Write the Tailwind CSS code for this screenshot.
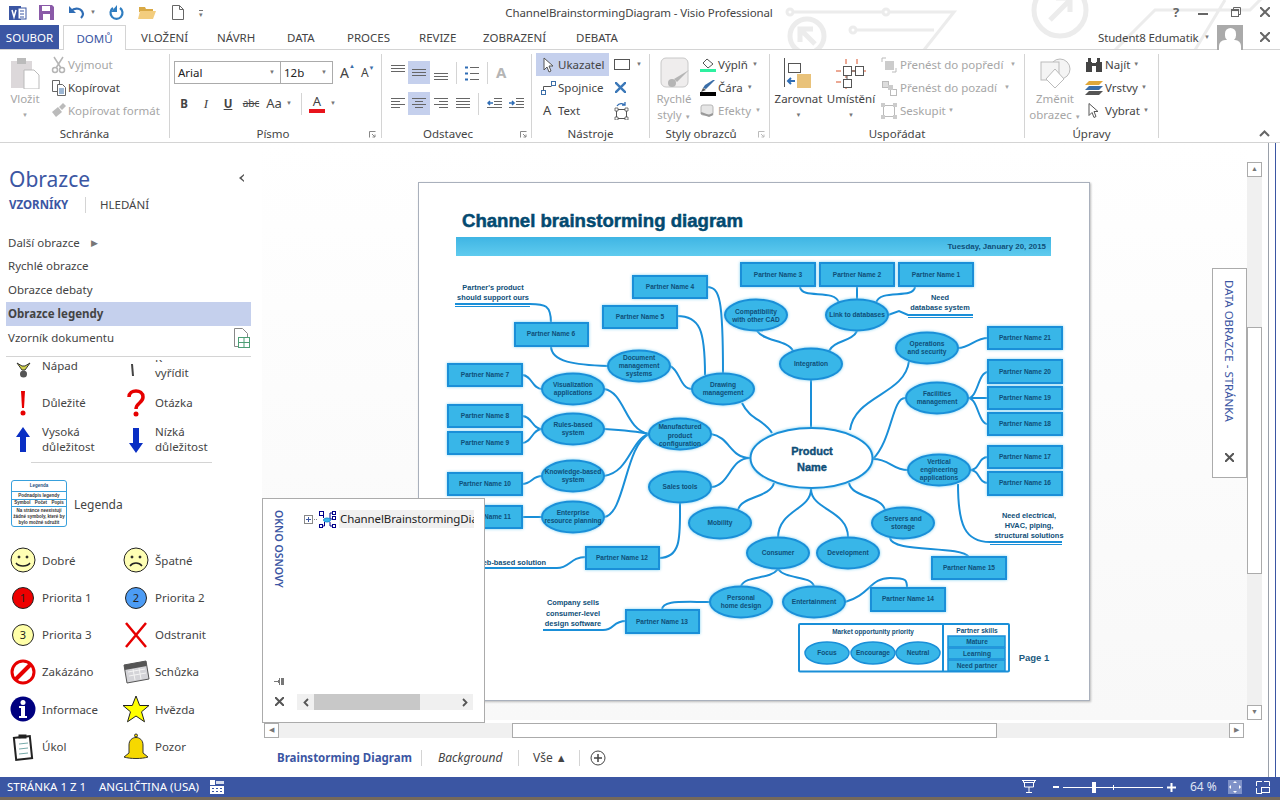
<!DOCTYPE html>
<html lang="cs">
<head>
  <meta charset="UTF-8">
  <title>ChannelBrainstormingDiagram - Visio Professional</title>
  <script src="https://cdn.jsdelivr.net/npm/@tailwindcss/browser@4"></script>
</head>
<body class="bg-white">
<div class="relative w-[1280px] h-[800px] overflow-hidden flex flex-col font-['Noto_Sans',sans-serif] text-[11.5px] text-[#444]">

  <!-- watermark behind title bar -->
  <svg class="absolute left-0 top-0" width="1280" height="50" fill="none" stroke="#ececec" stroke-width="3">
    <circle cx="1060" cy="10" r="26" stroke-width="5"/><path d="M1050 20l20-20M1056 -2h14v14" stroke-width="5"/>
    <circle cx="807" cy="36" r="17" stroke-width="5"/><path d="M815 44l-14-14M800 42V29h13" stroke-width="5"/>
    <circle cx="790" cy="12" r="3"/><path d="M793 12h90"/><circle cx="886" cy="12" r="3"/><path d="M889 12h65l-30 38"/>
    <circle cx="853" cy="30" r="3"/><path d="M856 30h78"/><path d="M1115 50l40-40h95l25-25M1225 0l-30 50"/>
  </svg>

  <!-- title bar -->
  <div class="relative h-[25px] flex items-center shrink-0">
    <svg class="ml-[9px]" width="18" height="18" viewBox="0 0 18 18"><rect x="0" y="2" width="12" height="14" fill="#3b56a3"/><rect x="9" y="4" width="8" height="11" fill="#fff" stroke="#3b56a3"/><path d="M3 6l2 7 2-7" stroke="#fff" stroke-width="1.5" fill="none"/><path d="M11 7h4M11 10h4M11 13h4" stroke="#3b56a3"/></svg>
    <svg class="ml-[12px]" width="15" height="15" viewBox="0 0 15 15"><path d="M0 0h13l2 2v13H0z" fill="#8a5aa8"/><rect x="3" y="1" width="8" height="5" fill="#fff"/><rect x="4" y="9" width="7" height="6" fill="#fff"/></svg>
    <svg class="ml-[14px]" width="17" height="17" viewBox="0 0 17 17" fill="none"><path d="M3 7c4-4 11-3 12 3 0 2-1 3-2 4" stroke="#2f6db5" stroke-width="2.2"/><path d="M1 2v7h7z" fill="#2f6db5"/></svg>
    <span class="ml-[5px] text-[6px] text-[#777]">▼</span>
    <svg class="ml-[12px]" width="16" height="16" viewBox="0 0 16 16" fill="none"><path d="M12 3a6 6 0 1 1-7 0" stroke="#2f7dc0" stroke-width="2.2"/><path d="M9 0v7H3z" fill="#2f7dc0"/></svg>
    <svg class="ml-[14px]" width="18" height="15" viewBox="0 0 18 15"><path d="M1 2h6l1 2h7v3H1z" fill="#d9a945"/><path d="M0 14l2-8h16l-3 8z" fill="#f3cd7e"/></svg>
    <svg class="ml-[16px]" width="12" height="15" viewBox="0 0 12 15" fill="#fff" stroke="#666"><path d="M.5.5h7l4 4v10H.5z"/><path d="M7.5.5v4h4" fill="none"/></svg>
    <span class="ml-[15px] text-[7px] leading-[7px] text-[#777] border-t border-[#777] mt-[2px]">▾</span>
    <div class="absolute left-[505px] top-[4px] w-[268px] text-center whitespace-nowrap text-[11.5px] tracking-[-0.12px] leading-[18px] text-[#444]">ChannelBrainstormingDiagram - Visio Professional</div>
    <span class="absolute left-[1173px] top-[3px] font-bold text-[13px] text-[#666]">?</span>
    <div class="absolute left-[1198px] top-[13px] w-[10px] h-[2px] bg-[#666]"></div>
    <svg class="absolute left-[1231px] top-[7px]" width="10" height="10" fill="none" stroke="#666"><rect x="0.5" y="2.5" width="7" height="7"/><path d="M2.5 2.5v-2h7v7h-2" /><path d="M0 3.5h8"/></svg>
    <svg class="absolute left-[1260px] top-[7px]" width="10" height="10" stroke="#666" stroke-width="2"><path d="M0 0l10 10M10 0L0 10"/></svg>
  </div>

  <!-- tabs -->
  <div class="relative h-[25px] flex items-stretch shrink-0 border-b border-[#d4d4d4] whitespace-nowrap leading-[25px] text-[11.5px]">
    <div class="w-[59px] bg-[#3b56a3] text-white text-center">SOUBOR</div>
    <div class="ml-[4px] w-[63px] h-[25px] bg-white border border-b-0 border-[#d4d4d4] text-[#3b56a3] text-center">DOMŮ</div>
    <div class="ml-[15px] w-[48px]">VLOŽENÍ</div>
    <div class="ml-[28px] w-[41px]">NÁVRH</div>
    <div class="ml-[29px] w-[31px]">DATA</div>
    <div class="ml-[29px] w-[44px]">PROCES</div>
    <div class="ml-[28px] w-[36px]">REVIZE</div>
    <div class="ml-[28px] w-[64px]">ZOBRAZENÍ</div>
    <div class="ml-[29px] w-[44px]">DEBATA</div>
    <div class="absolute left-[1098px] top-0 tracking-[-0.15px]">Student8 Edumatik</div>
    <span class="absolute left-[1204px] top-0 text-[6px] text-[#777]">▼</span>
    <div class="absolute left-[1217px] top-0 w-[26px] h-[25px] bg-[#aaa] overflow-hidden">
      <div class="mx-auto mt-[3px] w-[11px] h-[13px] bg-white rounded-full"></div>
      <div class="mx-auto mt-[-1px] w-[22px] h-[12px] bg-white rounded-t-[6px]"></div>
    </div>
    <svg class="absolute left-[1260px] top-[7px]" width="10" height="10" stroke="#666" stroke-width="2"><path d="M0 0l10 10M10 0L0 10"/></svg>
  </div>

  <!-- ribbon -->
  <div class="relative h-[93px] shrink-0 flex items-start border-b border-[#d4d4d4] whitespace-nowrap pt-[4px]">

    <!-- Schránka -->
    <div class="w-[170px] h-[84px] border-r border-[#d4d4d4] flex flex-col">
      <div class="h-[69px] flex">
        <div class="w-[50px] flex flex-col items-center text-[#a6a6a6]">
          <svg class="mt-[3px] shrink-0" width="32" height="32" viewBox="0 0 32 32"><rect x="2" y="4" width="21" height="27" fill="#dcd8da"/><rect x="8" y="1" width="9" height="6" fill="#bbb"/><path d="M15 13h10l5 5v14H15z" fill="#fff" stroke="#bbb"/></svg>
          <div class="mt-[2px] leading-[16px]">Vložit</div>
          <div class="leading-[16px] text-[6px]">▼</div>
        </div>
        <div class="flex flex-col mt-[-1px]">
          <div class="h-[23px] flex items-center text-[#a6a6a6]"><svg width="18" height="18" viewBox="0 0 18 18" fill="none" stroke="#b5b5b5" stroke-width="1.5"><circle cx="5" cy="14" r="2.5"/><circle cx="12" cy="14" r="2.5"/><path d="M6 12L13 1M11 12L4 1"/></svg>Vyjmout</div>
          <div class="h-[23px] flex items-center text-[#444]"><svg width="18" height="18" viewBox="0 0 18 18" fill="#fff" stroke="#666"><path d="M2.5 1.5h7v11h-7z"/><path d="M7.5 5.5h5l3 3v8h-8z"/><path d="M9 10h5M9 12h5M9 14h5" stroke="#3b6ea8"/></svg>Kopírovat</div>
          <div class="h-[23px] flex items-center text-[#a6a6a6]"><svg width="18" height="18" viewBox="0 0 18 18" fill="#bbb"><path d="M2 10l6-5 4 5-6 5z"/><path d="M9 5l4-4 3 3-4 4z"/></svg>Kopírovat formát</div>
        </div>
      </div>
      <div class="h-[15px] leading-[22px] text-center">Schránka</div>
    </div>

    <!-- Písmo -->
    <div class="relative w-[212px] h-[84px] border-r border-[#d4d4d4] flex flex-col">
      <div class="h-[69px] flex flex-col">
        <div class="flex items-center pl-[4px] mt-[7px] h-[23px]">
          <div class="w-[107px] h-[23px] border border-[#ababab] flex items-center px-[3px] justify-between text-[#222]">Arial<span class="text-[6px] text-[#777] mr-[2px]">▼</span></div>
          <div class="w-[52px] h-[23px] border border-l-0 border-[#ababab] flex items-center px-[3px] justify-between text-[#222]">12b<span class="text-[6px] text-[#777] mr-[2px]">▼</span></div>
          <span class="ml-[7px] text-[14px]">A<span class="align-top text-[6px] text-[#3b6ea8]">▲</span></span>
          <span class="ml-[6px] text-[12px]">A<span class="align-top text-[6px] text-[#3b6ea8]">▼</span></span>
        </div>
        <div class="flex items-center h-[23px] mt-[8px] pl-[3px] text-center">
          <span class="w-[22px] font-bold">B</span>
          <span class="w-[22px] italic font-['Liberation_Serif',serif] text-[13px]">I</span>
          <span class="w-[22px] underline font-bold">U</span>
          <span class="w-[24px] line-through text-[10px]">abc</span>
          <span class="w-[22px] text-[13px]">Aa</span>
          <span class="w-[8px] text-[6px] text-[#777]">▼</span>
          <span class="ml-[8px] w-px h-[22px] bg-[#d4d4d4]"></span>
          <span class="ml-[6px] w-[18px] flex flex-col items-center text-[13px] leading-[15px]">A<span class="w-[16px] h-[4px] bg-[#e8141c]"></span></span>
          <span class="ml-[4px] text-[6px] text-[#777]">▼</span>
        </div>
      </div>
      <div class="h-[15px] leading-[22px] text-center pr-[5px]">Písmo</div>
      <svg class="absolute left-[199px] top-[77px]" width="7" height="7" fill="none" stroke="#888"><path d="M.5 6.5v-6h6M3 3l3 3M6 3.5V6H3.5"/></svg>
    </div>

    <!-- Odstavec -->
    <div class="relative w-[150px] h-[84px] border-r border-[#d4d4d4] flex flex-col">
      <div class="h-[69px] flex flex-col pl-[5px]">
        <div class="flex items-center mt-[7px] h-[23px]">
          <div class="w-[21px] h-[23px] flex justify-center items-start pt-[4px]"><svg width="14" height="8" stroke="#666"><path d="M0 .5h14M0 3.5h14M0 6.5h14"/></svg></div>
          <div class="w-[22px] h-[23px] flex justify-center items-center bg-[#c5d0ed]"><svg width="14" height="8" stroke="#666"><path d="M0 .5h14M0 3.5h14M0 6.5h14"/></svg></div>
          <div class="w-[21px] h-[23px] flex justify-center items-end pb-[3px]"><svg width="14" height="8" stroke="#666"><path d="M0 .5h14M0 3.5h14M0 6.5h14"/></svg></div>
          <span class="ml-[5px] w-px h-[22px] bg-[#d4d4d4]"></span>
          <svg class="ml-[8px]" width="14" height="16" stroke="#666"><path d="M5 2.5h9M5 8.5h9M5 14.5h9"/><path d="M0 2.5h3M0 8.5h3M0 14.5h3" stroke="#2f6db5" stroke-width="2"/></svg>
          <span class="ml-[8px] w-px h-[22px] bg-[#d4d4d4]"></span>
          <span class="ml-[8px] text-[15px] font-bold text-[#b5b5b5]">A</span>
        </div>
        <div class="flex items-center mt-[8px] h-[23px]">
          <div class="w-[21px] flex justify-center"><svg width="14" height="11" stroke="#666"><path d="M0 .5h14M0 3.5h9M0 6.5h14M0 9.5h9"/></svg></div>
          <div class="w-[22px] h-[23px] flex justify-center items-center bg-[#c5d0ed]"><svg width="14" height="11" stroke="#666"><path d="M0 .5h14M3 3.5h8M0 6.5h14M3 9.5h8"/></svg></div>
          <div class="w-[21px] flex justify-center"><svg width="14" height="11" stroke="#666"><path d="M0 .5h14M5 3.5h9M0 6.5h14M5 9.5h9"/></svg></div>
          <div class="w-[23px] flex justify-center"><svg width="14" height="11" stroke="#666"><path d="M0 .5h14M0 3.5h14M0 6.5h14M0 9.5h14"/></svg></div>
          <span class="ml-[4px] w-px h-[22px] bg-[#d4d4d4]"></span>
          <svg class="ml-[8px]" width="15" height="11" fill="none" stroke="#666"><path d="M7 .5h8M7 3.5h8M7 6.5h8M0 9.5h15"/><path d="M6 5H1M3 3L1 5l2 2" stroke="#2f6db5" stroke-width="1.5"/></svg>
          <svg class="ml-[7px]" width="15" height="11" fill="none" stroke="#666"><path d="M7 .5h8M7 3.5h8M7 6.5h8M0 9.5h15"/><path d="M0 5h5M3 3l2 2-2 2" stroke="#2f6db5" stroke-width="1.5"/></svg>
        </div>
      </div>
      <div class="h-[15px] leading-[22px] text-center pr-[17px]">Odstavec</div>
      <svg class="absolute left-[138px] top-[77px]" width="7" height="7" fill="none" stroke="#888"><path d="M.5 6.5v-6h6M3 3l3 3M6 3.5V6H3.5"/></svg>
    </div>

    <!-- Nástroje -->
    <div class="w-[118px] h-[84px] border-r border-[#d4d4d4] flex flex-col">
      <div class="h-[69px] flex flex-col mt-[-1px]">
        <div class="flex items-center h-[23px]">
          <div class="ml-[4px] w-[73px] h-[23px] bg-[#c5d0ed] flex items-center pl-[7px]"><svg width="12" height="16" viewBox="0 0 12 16" fill="#fff" stroke="#555"><path d="M1 1v12l3-3 2 5 2-1-2-5h4z"/></svg><span class="ml-[3px]">Ukazatel</span></div>
          <div class="ml-[5px] w-[16px] h-[11px] border border-[#555]"></div>
          <span class="ml-[6px] text-[6px] text-[#777]">▼</span>
        </div>
        <div class="flex items-center h-[23px]">
          <svg class="ml-[8px]" width="17" height="16" fill="#fff" stroke="#3b6ea8"><rect x="11.5" y="1.5" width="4" height="4"/><rect x="1.5" y="10.5" width="4" height="4"/><path d="M3.5 10V6.5h8" fill="none" stroke="#555"/></svg>
          <span class="ml-[1px] w-[57px]">Spojnice</span>
          <svg width="11" height="11" stroke="#3b78b8" stroke-width="2.4"><path d="M0 0l11 11M11 0L0 11"/></svg>
        </div>
        <div class="flex items-center h-[23px]">
          <span class="ml-[11px] w-[15px] text-[13px]">A</span>
          <span class="w-[55px]">Text</span>
          <svg width="16" height="18" fill="none" stroke="#555"><rect x="3.5" y="7.5" width="10" height="9"/><path d="M2 6h3v3H2zM12 6h3v3h-3zM2 15h3v3H2zM12 15h3v3h-3z" fill="#fff" stroke-width="0.8"/><path d="M4 4c2-3 6-3 8-1M12 0v3H9" stroke="#2f6db5" stroke-width="1.3"/></svg>
        </div>
      </div>
      <div class="h-[15px] mt-[1px] leading-[22px] text-center">Nástroje</div>
    </div>

    <!-- Styly obrazců -->
    <div class="relative w-[120px] h-[84px] border-r border-[#d4d4d4] flex flex-col">
      <div class="h-[69px] flex">
        <div class="w-[48px] flex flex-col items-center text-[#a6a6a6]">
          <svg class="mt-[3px] ml-[2px] shrink-0" width="32" height="32" viewBox="0 0 32 32"><rect x="2" y="1" width="27" height="29" rx="5" fill="#efeded" stroke="#c8c8c8"/><path d="M30 13L18 25l-3-3z" fill="#b5b5b5"/><circle cx="13" cy="26" r="4" fill="#b5b5b5"/></svg>
          <div class="mt-[2px] leading-[16px] shrink-0">Rychlé</div>
          <div class="leading-[16px] shrink-0">styly <span class="text-[6px] leading-none">▼</span></div>
        </div>
        <div class="flex flex-col mt-[-1px]">
          <div class="h-[23px] flex items-center"><span class="w-[20px] flex flex-col items-center"><svg width="16" height="11" viewBox="0 0 16 11" fill="#fff" stroke="#555"><path d="M7 1l6 5-5 4-5-5z"/></svg><span class="w-[16px] h-[3px] bg-[#2ef0a0]"></span></span>Výplň <span class="ml-[4px] text-[6px] text-[#777]">▼</span></div>
          <div class="h-[23px] flex items-center"><span class="w-[20px] flex flex-col items-center"><svg width="16" height="12" viewBox="0 0 16 12"><path d="M15 0L6 9l-3-1 2-3 8-5z" fill="#3b6ea8"/><path d="M3 8l3 2-5 2z" fill="#555"/></svg><span class="w-[16px] h-[4px] bg-black"></span></span>Čára <span class="ml-[4px] text-[6px] text-[#777]">▼</span></div>
          <div class="h-[23px] flex items-center text-[#a6a6a6]"><svg class="mr-[4px] ml-[1px]" width="15" height="14" viewBox="0 0 15 14"><rect x="2" y="1" width="12" height="10" rx="2" fill="#e6e6e6" stroke="#b5b5b5"/><path d="M2 9l8 3 4-2" stroke="#999" fill="none" stroke-width="2"/></svg>Efekty <span class="ml-[4px] text-[6px]">▼</span></div>
        </div>
      </div>
      <div class="h-[15px] leading-[22px] text-center pr-[17px]">Styly obrazců</div>
      <svg class="absolute left-[108px] top-[77px]" width="7" height="7" fill="none" stroke="#bbb"><path d="M.5 6.5v-6h6M3 3l3 3M6 3.5V6H3.5"/></svg>
    </div>

    <!-- Uspořádat -->
    <div class="w-[255px] h-[84px] border-r border-[#d4d4d4] flex flex-col">
      <div class="h-[69px] flex">
        <div class="w-[57px] flex flex-col items-center">
          <svg class="mt-[3px] shrink-0" width="30" height="32" viewBox="0 0 30 32"><path d="M.5 1v29" stroke="#555"/><rect x="4.5" y="6.5" width="12" height="9" fill="#fff" stroke="#555"/><rect x="13" y="17" width="14" height="14" fill="#e9c27a"/><path d="M11 24H4M7 21l-3 3 3 3" stroke="#2f6db5" stroke-width="2" fill="none"/></svg>
          <div class="mt-[2px] leading-[16px]">Zarovnat</div>
          <div class="leading-[16px] text-[6px] text-[#777]">▼</div>
        </div>
        <div class="w-[48px] flex flex-col items-center">
          <svg class="mt-[3px] shrink-0" width="30" height="32" viewBox="0 0 30 32" fill="#fff" stroke="#555"><path d="M10 2v30M0 14h30M21 2v6M0 25h6" stroke="#d8532b" stroke-dasharray="5 9"/><rect x="7.5" y="9.5" width="8" height="9"/><rect x="19.5" y="9.5" width="8" height="9"/><rect x="7.5" y="22.5" width="8" height="8"/><path d="M15 14h5M11 18v5" fill="none"/></svg>
          <div class="mt-[2px] leading-[16px]">Umístění</div>
          <div class="leading-[16px] text-[6px] text-[#777]">▼</div>
        </div>
        <div class="ml-[5px] flex flex-col text-[#a6a6a6] mt-[-1px]">
          <div class="h-[23px] flex items-center"><svg class="mr-[3px] ml-[1px]" width="16" height="16" fill="#fff" stroke="#bbb"><path d="M1 1h4M1 1v4M15 15h-4M15 15v-4"/><rect x="4" y="4" width="9" height="9" fill="#ccc" stroke="none"/></svg><span class="w-[110px]">Přenést do popředí</span><span class="text-[6px]">▼</span></div>
          <div class="h-[23px] flex items-center"><svg class="mr-[3px] ml-[1px]" width="16" height="16" fill="#fff" stroke="#bbb"><rect x="1.5" y="1.5" width="6" height="6" fill="#ddd"/><rect x="9.5" y="9.5" width="6" height="6"/><rect x="7" y="5" width="5" height="5" fill="#ccc" stroke="none"/></svg><span class="w-[104px]">Přenést do pozadí</span><span class="text-[6px]">▼</span></div>
          <div class="h-[23px] flex items-center"><svg class="mr-[3px] ml-[1px]" width="16" height="16" fill="#ccc" stroke="#bbb"><rect x="2.5" y="2.5" width="11" height="11" fill="none"/><rect x="0" y="0" width="4" height="4" stroke="none"/><rect x="12" y="0" width="4" height="4" stroke="none"/><rect x="0" y="12" width="4" height="4" stroke="none"/><rect x="12" y="12" width="4" height="4" stroke="none"/></svg><span class="w-[48px]">Seskupit</span><span class="text-[6px]">▼</span></div>
        </div>
      </div>
      <div class="h-[15px] leading-[22px] text-center">Uspořádat</div>
    </div>

    <!-- Úpravy -->
    <div class="w-[134px] h-[84px] border-r border-[#d4d4d4] flex flex-col">
      <div class="h-[69px] flex">
        <div class="w-[60px] flex flex-col items-center text-[#a6a6a6]">
          <svg class="mt-[3px] shrink-0" width="32" height="32" viewBox="0 0 32 32" fill="#f4f4f4" stroke="#bbb"><circle cx="21" cy="12" r="10"/><rect x="2" y="5" width="18" height="18"/><path d="M16 12l9 10-9 9-9-9z" fill="#fff"/></svg>
          <div class="mt-[2px] leading-[16px] shrink-0">Změnit</div>
          <div class="leading-[16px] shrink-0">obrazec <span class="text-[6px] leading-none">▼</span></div>
        </div>
        <div class="flex flex-col mt-[-1px]">
          <div class="h-[23px] flex items-center"><svg class="mr-[2px]" width="18" height="15" viewBox="0 0 18 15" fill="#444"><rect x="1" y="5" width="6" height="10"/><rect x="11" y="5" width="6" height="10"/><rect x="3" y="1" width="3" height="4"/><rect x="12" y="1" width="3" height="4"/><rect x="7" y="6" width="4" height="3"/></svg>Najít <span class="ml-[3px] text-[6px] text-[#777]">▼</span></div>
          <div class="h-[23px] flex items-center"><svg class="mr-[2px]" width="18" height="16" viewBox="0 0 18 16"><path d="M4 1h14l-4 4H0z" fill="#e0a83a"/><path d="M4 6h14l-4 4H0z" fill="#3b6ea8"/><path d="M4 11h14l-4 4H0z" fill="#555"/></svg>Vrstvy <span class="ml-[3px] text-[6px] text-[#777]">▼</span></div>
          <div class="h-[23px] flex items-center"><svg class="mr-[5px] ml-[3px]" width="12" height="17" viewBox="0 0 12 16" fill="#fff" stroke="#555"><path d="M1 1v12l3-3 2 5 2-1-2-5h4z"/></svg>Vybrat <span class="ml-[3px] text-[6px] text-[#777]">▼</span></div>
        </div>
      </div>
      <div class="h-[15px] leading-[22px] text-center">Úpravy</div>
    </div>

    <svg class="absolute left-[1259px] top-[80px]" width="11" height="7" fill="none" stroke="#666" stroke-width="2"><path d="M1 6l4.500-4.500L10 6"/></svg>
  </div>

  <!-- main area -->
  <div class="relative flex-1 flex min-h-0">

    <!-- Obrazce panel -->
    <div class="w-[262px] shrink-0 flex flex-col relative">
      <div class="mt-[22px] ml-[9px] text-[21px] leading-[28px] text-[#3b56a3]">Obrazce</div>
      <svg class="absolute left-[239px] top-[31px]" width="6" height="8" fill="#555"><path d="M5 0v1.500L2.500 4 5 6.500V8L0 4z"/></svg>
      <div class="mt-[4px] ml-[9px] flex items-center leading-[16px]">
        <span class="w-[60px] font-bold text-[#3b56a3]">VZORNÍKY</span>
        <span class="ml-[16px] w-px h-[16px] bg-[#d4d4d4]"></span>
        <span class="ml-[14px]">HLEDÁNÍ</span>
      </div>
      <div class="mt-[18px] flex flex-col leading-[24px]">
        <div class="h-[23px] pl-[8px] flex items-center">Další obrazce<span class="ml-[11px] text-[9px] text-[#777]">▶</span></div>
        <div class="h-[24px] pl-[8px]">Rychlé obrazce</div>
        <div class="h-[24px] pl-[8px]">Obrazce debaty</div>
        <div class="h-[24px] ml-[6px] mr-[11px] pl-[2px] bg-[#c5d0ed] font-bold">Obrazce legendy</div>
        <div class="h-[24px] pl-[8px] pr-[11px] flex justify-between items-center">Vzorník dokumentu
          <svg width="18" height="20" fill="#fff"><path d="M1.500.5h8l5 5v13h-13z" stroke="#888"/><g stroke="#4d9e75"><rect x="5.500" y="9.500" width="11" height="10"/><path d="M11 9.500v10M5.500 14.500h11" fill="none"/></g></svg>
        </div>
      </div>
      <div class="mt-[6px] ml-[6px] mr-[11px] h-px bg-[#d4d4d4]"></div>

      <div class="mt-[3px] overflow-hidden flex-1 min-h-0">
        <div class="mt-[-13px] grid grid-cols-[113px_113px] pl-[8px] auto-rows-[37.2px] leading-[15px]">
          <div class="flex items-center"><svg width="30" height="30" viewBox="0 0 30 30"><path d="M9 12l5 7h3l5-7-5 3h-3z" fill="#d2d24a" stroke="#333"/><circle cx="15.500" cy="23" r="3.500" fill="#555"/></svg><span class="ml-[4px]">Nápad</span></div>
          <div class="flex items-center"><svg width="30" height="30" viewBox="0 0 30 30"><path d="M11 13l1 12" stroke="#444" stroke-width="2"/></svg><span class="ml-[4px] mt-[-2px]">K<br>vyřídit</span></div>
          <div class="flex items-center"><svg width="30" height="30" viewBox="0 0 30 30" fill="#e60000"><path d="M13 3h4l-1 17h-2z"/><circle cx="15" cy="25" r="2.500"/></svg><span class="ml-[4px]">Důležité</span></div>
          <div class="flex items-center"><svg width="30" height="30" viewBox="0 0 30 30" fill="none"><path d="M8 9c0-8 14-8 14 0 0 6-7 6-7 12" stroke="#e60000" stroke-width="3.500"/><circle cx="15" cy="26" r="2.500" fill="#e60000"/></svg><span class="ml-[4px]">Otázka</span></div>
          <div class="flex items-center"><svg width="30" height="30" viewBox="0 0 30 30" fill="#0a2fc4"><path d="M15 2l7 10h-4v15h-6V12H8z"/></svg><span class="ml-[4px] mt-[-2px]">Vysoká<br>důležitost</span></div>
          <div class="flex items-center"><svg width="30" height="30" viewBox="0 0 30 30" fill="#0a2fc4"><path d="M15 28l7-10h-4V3h-6v15H8z"/></svg><span class="ml-[4px] mt-[-2px]">Nízká<br>důležitost</span></div>
        </div>
        <div class="mt-[3px] ml-[31px] w-[181px] h-px bg-[#d4d4d4]"></div>

        <div class="mt-[17px] ml-[11px] flex items-center h-[47px]">
          <div class="w-[56px] h-[47px] border border-[#38a0dc] rounded-[3px] flex flex-col text-center text-[4.5px] leading-[6px] font-bold text-[#333] whitespace-nowrap font-['Liberation_Sans',sans-serif]">
            <div class="h-[10px] leading-[10px] text-[#1d4f80]">Legenda</div>
            <div class="h-[9px] leading-[7px] border-y border-[#38a0dc]">Podnadpis legendy</div>
            <div class="h-[8px] flex border-b border-[#38a0dc] justify-around"><span>Symbol</span><span>Počet</span><span>Popis</span></div>
            <div class="leading-[6px] pt-[1px]">Na stránce neexistují<br>žádné symboly, které by<br>bylo možné sdružit</div>
          </div>
          <span class="ml-[7px] mt-[4px] text-[12px]">Legenda</span>
        </div>

        <div class="mt-[15px] grid grid-cols-[113px_113px] pl-[8px] auto-rows-[37.3px]">
          <div class="flex items-center"><svg width="30" height="30" viewBox="0 0 30 30" fill="none" stroke="#222"><circle cx="15" cy="15" r="12" fill="#ffffb4"/><circle cx="11" cy="12" r="1" fill="#222"/><circle cx="19" cy="12" r="1" fill="#222"/><path d="M8 18c3 4 11 4 14 0" stroke-width="1.500"/></svg><span class="ml-[4px]">Dobré</span></div>
          <div class="flex items-center"><svg width="30" height="30" viewBox="0 0 30 30" fill="none" stroke="#222"><circle cx="15" cy="15" r="12" fill="#ffffb4"/><circle cx="11" cy="12" r="1" fill="#222"/><circle cx="19" cy="12" r="1" fill="#222"/><path d="M9 21c3-4 9-4 12 0" stroke-width="1.500"/></svg><span class="ml-[4px]">Špatné</span></div>
          <div class="flex items-center"><span class="ml-[4px] w-[22px] h-[22px] rounded-full bg-[#ee0000] border border-[#222] text-center leading-[20px] text-[11px] text-[#222]">1</span><span class="ml-[8px]">Priorita 1</span></div>
          <div class="flex items-center"><span class="ml-[4px] w-[22px] h-[22px] rounded-full bg-[#4c9cf5] border border-[#222] text-center leading-[20px] text-[11px] text-[#222]">2</span><span class="ml-[8px]">Priorita 2</span></div>
          <div class="flex items-center"><span class="ml-[4px] w-[22px] h-[22px] rounded-full bg-[#ffffa8] border border-[#222] text-center leading-[20px] text-[11px] text-[#222]">3</span><span class="ml-[8px]">Priorita 3</span></div>
          <div class="flex items-center"><svg width="30" height="30" viewBox="0 0 30 30" stroke="#e60000" stroke-width="2.500"><path d="M5 3l20 24M25 3L5 27"/></svg><span class="ml-[4px]">Odstranit</span></div>
          <div class="flex items-center"><svg width="30" height="30" viewBox="0 0 30 30" fill="none" stroke="#e60000" stroke-width="3"><circle cx="15" cy="15" r="11"/><path d="M8 22L22 8" stroke-width="4"/></svg><span class="ml-[4px]">Zakázáno</span></div>
          <div class="flex items-center"><svg width="30" height="30" viewBox="0 0 30 30"><path d="M3 8l22-4 3 18-22 4z" fill="#d4d4d8" stroke="#555"/><path d="M3 8l22-4 .8 5-22 4z" fill="#555"/><path d="M7 15l17-3M8 19l17-3M12 12l2 11M18 11l2 11" stroke="#f4f4f4"/></svg><span class="ml-[4px]">Schůzka</span></div>
          <div class="flex items-center"><svg width="30" height="30" viewBox="0 0 30 30"><circle cx="15" cy="15" r="12.500" fill="#00007f"/><circle cx="15" cy="8.500" r="2.500" fill="#fff"/><path d="M11 12h6v10h2v2h-8v-2h2v-8h-2z" fill="#fff"/></svg><span class="ml-[4px]">Informace</span></div>
          <div class="flex items-center"><svg width="30" height="30" viewBox="0 0 30 30"><path d="M15 2l3.700 9.500H28l-7.500 6.300 3 10L15 22l-8.500 5.800 3-10L2 11.500h9.300z" fill="#ffff00" stroke="#222"/></svg><span class="ml-[4px]">Hvězda</span></div>
          <div class="flex items-center"><svg width="30" height="30" viewBox="0 0 30 30" fill="#fff" stroke="#222"><rect x="7" y="5" width="16" height="22" transform="rotate(-6 15 16)" stroke-width="2"/><path d="M11 12l9-1M11 17l9-1M11 22l9-1" stroke="#7aa" /><rect x="11" y="3" width="7" height="3" fill="#222"/></svg><span class="ml-[4px]">Úkol</span></div>
          <div class="flex items-center"><svg width="30" height="30" viewBox="0 0 30 30" stroke="#333"><path d="M8 21v-8c0-10 14-10 14 0v8l5 4c-6 2-18 2-24 0z" fill="#f6d800"/><circle cx="15" cy="3.500" r="1.500" fill="#f6d800"/></svg><span class="ml-[4px]">Pozor</span></div>
        </div>
      </div>
    </div>

    <!-- canvas column -->
    <div class="w-[985px] shrink-0 flex flex-col">
      <div class="h-[577px] shrink-0 pl-[156px] pt-[39px] bg-linear-to-b from-white to-[#f8f8f8]">
        <div class="w-[672px] h-[519px] bg-white border border-[#a9b0bc] shadow-[1px_1px_2px_#bbb]">
          <svg width="670" height="517" viewBox="419 183 670 517" class="font-['Liberation_Sans',sans-serif] font-bold text-[6.6px] fill-[#0f4f78]" text-anchor="middle">
            <defs><linearGradient id="band" x1="0" y1="0" x2="0" y2="1"><stop offset="0" stop-color="#3fb5e4"/><stop offset="1" stop-color="#5fcbee"/></linearGradient></defs>

            <text x="462" y="227" text-anchor="start" textLength="281" lengthAdjust="spacingAndGlyphs" stroke="#034a70" stroke-width="0.5" class="text-[18px] fill-[#034a70]">Channel brainstorming diagram</text>
            <rect x="456" y="237" width="595" height="19" fill="url(#band)"/>
            <text x="1046" y="249" text-anchor="end" class="text-[7.9px]">Tuesday, January 20, 2015</text>

            <!-- connectors -->
            <g fill="none" class="stroke-[#1a8fd8]" stroke-width="2">
              <path d="M551 323C551 305 545 304 530 304H455"/><path d="M455 306.500H530" stroke-width="1"/>
              <path d="M551 346C551 362 575 365 608 366"/>
              <path d="M677 316C700 316 705 330 705 375"/>
              <path d="M707 287C720 287 723 300 723 373"/>
              <path d="M670 366C680 370 680 389 692 389"/>
              <path d="M742 403C750 420 765 420 772 433"/>
              <path d="M757 331C765 342 788 340 793 351"/>
              <path d="M857 331C852 342 834 340 829 351"/>
              <path d="M811 380V430"/>
              <path d="M800 287C802 300 835 288 839 303"/>
              <path d="M857 287V299"/>
              <path d="M915 287C913 300 880 288 876 303"/>
              <path d="M888 315L899 311L908 315H973"/><path d="M908 317.500H973" stroke-width="1"/>
              <path d="M958 348C970 348 975 338 988 338"/>
              <path d="M909 361C905 395 855 395 850 430"/>
              <path d="M905 398C892 398 892 440 873 459"/>
              <path d="M968 398C978 398 978 372 988 372"/><path d="M968 398H988"/><path d="M968 398C978 398 978 424 988 424"/>
              <path d="M873 459C890 459 892 470 908 470"/>
              <path d="M970 470C980 470 978 457 988 457"/><path d="M970 470C980 470 978 483 988 483"/>
              <path d="M958 484C958 525 965 542 990 542H1062"/><path d="M990 544.500H1062" stroke-width="1"/>
              <path d="M811 489C811 510 778 510 778 538"/><path d="M811 489C811 510 848 510 848 537"/>
              <path d="M849 483C852 498 882 496 885 510"/>
              <path d="M774 483C770 498 741 496 738 510"/>
              <path d="M711 434C730 437 730 458 750 458"/>
              <path d="M712 487C730 485 730 458 750 458"/>
              <path d="M680 503C680 535 682 558 659 558"/>
              <path d="M586 557C570 557 570 568 557 568H480"/>
              <path d="M604 389C625 392 625 430 649 434"/>
              <path d="M604 429C620 430 635 431 649 434"/>
              <path d="M604 476C630 472 630 440 649 434"/>
              <path d="M604 517C625 515 625 445 649 434"/>
              <path d="M522 375C532 375 532 389 542 389"/>
              <path d="M522 416C532 416 532 429 542 429"/>
              <path d="M522 443C532 443 532 429 542 429"/>
              <path d="M522 484C532 484 532 476 542 476"/>
              <path d="M522 517H542"/>
              <path d="M778 569C770 580 746 575 741 586"/>
              <path d="M778 569C786 580 810 575 814 586"/>
              <path d="M710 602C680 602 662 600 662 610"/>
              <path d="M626 621C612 621 615 630 603 630H543"/>
              <path d="M845 602C870 595 870 578 890 578C907 578 907 580 907 588"/>
              <path d="M890 538C892 553 960 545 969 557"/>
            </g>

            <!-- partner boxes -->
            <g class="fill-[#38b6e8] stroke-[#1a8fd8] drop-shadow-[0_0_1.5px_#7fd0f0]" stroke-width="2">
              <rect x="741" y="263" width="74" height="23"/><rect x="820" y="263" width="74" height="23"/><rect x="899" y="263" width="74" height="23"/>
              <rect x="633" y="276" width="74" height="22"/><rect x="603" y="306" width="74" height="22"/><rect x="515" y="323" width="73" height="23"/>
              <rect x="448" y="364" width="74" height="22"/><rect x="448" y="405" width="74" height="22"/><rect x="448" y="432" width="74" height="22"/>
              <rect x="448" y="473" width="74" height="22"/><rect x="448" y="506" width="74" height="22"/>
              <rect x="586" y="547" width="73" height="22"/><rect x="626" y="610" width="73" height="23"/>
              <rect x="871" y="588" width="74" height="23"/><rect x="932" y="557" width="74" height="22"/>
              <rect x="988" y="327" width="74" height="22"/><rect x="988" y="360" width="74" height="23"/><rect x="988" y="387" width="74" height="22"/><rect x="988" y="413" width="74" height="22"/>
              <rect x="988" y="446" width="74" height="22"/><rect x="988" y="472" width="74" height="23"/>
            </g>
            <!-- topic bubbles -->
            <g class="fill-[#38b6e8] stroke-[#1a8fd8] drop-shadow-[0_0_1.5px_#7fd0f0]" stroke-width="2">
              <ellipse cx="756" cy="315" rx="31" ry="15.500"/><ellipse cx="857" cy="315" rx="31" ry="15.500"/><ellipse cx="811" cy="364" rx="31" ry="15.500"/>
              <ellipse cx="927" cy="348" rx="31" ry="15.500"/><ellipse cx="937" cy="398" rx="31" ry="15.500"/><ellipse cx="939" cy="470" rx="31" ry="15.500"/>
              <ellipse cx="903" cy="523" rx="31" ry="15.500"/><ellipse cx="848" cy="553" rx="31" ry="15.500"/><ellipse cx="778" cy="553" rx="31" ry="15.500"/>
              <ellipse cx="814" cy="602" rx="31" ry="15.500"/><ellipse cx="741" cy="602" rx="31" ry="15.500"/><ellipse cx="720" cy="523" rx="31" ry="15.500"/>
              <ellipse cx="680" cy="487" rx="31" ry="15.500"/><ellipse cx="573" cy="517" rx="31" ry="15.500"/><ellipse cx="573" cy="476" rx="31" ry="15.500"/>
              <ellipse cx="573" cy="429" rx="31" ry="15.500"/><ellipse cx="573" cy="389" rx="31" ry="15.500"/><ellipse cx="639" cy="366" rx="31" ry="15.500"/>
              <ellipse cx="723" cy="389" rx="31" ry="15.500"/><ellipse cx="680" cy="434" rx="31" ry="15.500"/>
            </g>
            <ellipse cx="811.500" cy="458" rx="61" ry="30" fill="#fff" class="stroke-[#1a8fd8] drop-shadow-[0_0_1.5px_#7fd0f0]" stroke-width="2"/>
            <g stroke="#0f4f78" stroke-width="0.4"><text x="812" y="455" class="text-[11px]">Product</text><text x="812" y="471" class="text-[11px]">Name</text></g>

            <!-- box labels -->
            <text x="778" y="277">Partner Name 3</text><text x="857" y="277">Partner Name 2</text><text x="936" y="277">Partner Name 1</text>
            <text x="670" y="289">Partner Name 4</text><text x="640" y="319">Partner Name 5</text><text x="551" y="336">Partner Name 6</text>
            <text x="485" y="377">Partner Name 7</text><text x="485" y="418">Partner Name 8</text><text x="485" y="445">Partner Name 9</text>
            <text x="485" y="486">Partner Name 10</text><text x="485" y="519">Partner Name 11</text>
            <text x="622" y="560">Partner Name 12</text><text x="662" y="624">Partner Name 13</text>
            <text x="908" y="601">Partner Name 14</text><text x="969" y="570">Partner Name 15</text>
            <text x="1025" y="340">Partner Name 21</text><text x="1025" y="374">Partner Name 20</text><text x="1025" y="400">Partner Name 19</text><text x="1025" y="426">Partner Name 18</text>
            <text x="1025" y="459">Partner Name 17</text><text x="1025" y="485">Partner Name 16</text>

            <!-- bubble labels -->
            <text x="756" y="314">Compatibility</text><text x="756" y="322">with other CAD</text>
            <text x="857" y="317">Link to databases</text>
            <text x="811" y="366">Integration</text>
            <text x="927" y="346">Operations</text><text x="927" y="354">and security</text>
            <text x="937" y="396">Facilities</text><text x="937" y="404">management</text>
            <text x="939" y="464">Vertical</text><text x="939" y="472">engineering</text><text x="939" y="480">applications</text>
            <text x="903" y="521">Servers and</text><text x="903" y="529">storage</text>
            <text x="848" y="555">Development</text><text x="778" y="555">Consumer</text>
            <text x="814" y="604">Entertainment</text>
            <text x="741" y="600">Personal</text><text x="741" y="608">home design</text>
            <text x="720" y="525">Mobility</text><text x="680" y="489">Sales tools</text>
            <text x="573" y="515">Enterprise</text><text x="573" y="523">resource planning</text>
            <text x="573" y="474">Knowledge-based</text><text x="573" y="482">system</text>
            <text x="573" y="427">Rules-based</text><text x="573" y="435">system</text>
            <text x="573" y="387">Visualization</text><text x="573" y="395">applications</text>
            <text x="639" y="360">Document</text><text x="639" y="368">management</text><text x="639" y="376">systems</text>
            <text x="723" y="387">Drawing</text><text x="723" y="395">management</text>
            <text x="680" y="429">Manufactured</text><text x="680" y="438">product</text><text x="680" y="446">configuration</text>

            <!-- notes -->
            <text x="493" y="290" class="text-[7.4px]">Partner's product</text><text x="493" y="300" class="text-[7.4px]">should support ours</text>
            <text x="940" y="300" class="text-[7.4px]">Need</text><text x="940" y="310" class="text-[7.4px]">database system</text>
            <text x="1029" y="518" class="text-[7.4px]">Need electrical,</text><text x="1029" y="528" class="text-[7.4px]">HVAC, piping,</text><text x="1029" y="538" class="text-[7.4px]">structural solutions</text>
            <text x="546" y="565" text-anchor="end" class="text-[7.4px]">Web-based solution</text>
            <text x="573" y="605" class="text-[7.4px]">Company sells</text><text x="573" y="616" class="text-[7.4px]">consumer-level</text><text x="573" y="626" class="text-[7.4px]">design software</text>

            <!-- legend -->
            <g fill="none" class="stroke-[#1a8fd8]" stroke-width="2"><rect x="799" y="624" width="210" height="47.500" rx="1"/><path d="M943 624v47.500"/></g>
            <text x="873" y="634" class="text-[6.4px]">Market opportunity priority</text><text x="977" y="633">Partner skills</text>
            <g class="fill-[#38b6e8] stroke-[#1a8fd8]" stroke-width="1.500">
              <ellipse cx="827" cy="653" rx="22" ry="11"/><ellipse cx="873" cy="653" rx="22" ry="11"/><ellipse cx="918" cy="653" rx="22" ry="11"/>
              <rect x="948" y="636" width="57" height="11"/><rect x="948" y="648" width="57" height="11"/><rect x="948" y="660" width="57" height="11"/>
            </g>
            <text x="827" y="655">Focus</text><text x="873" y="655">Encourage</text><text x="918" y="655">Neutral</text>
            <text x="977" y="643.500">Mature</text><text x="977" y="655.500">Learning</text><text x="977" y="667.500">Need partner</text>
            <text x="1034" y="661" class="text-[9.500px] fill-[#1a5a80]">Page 1</text>
          </svg>
        </div>
      </div>

      <!-- horizontal scrollbar -->
      <div class="mt-[3px] ml-[2px] w-[980px] h-[15px] bg-[#f0f0f0] flex items-stretch">
        <div class="w-[15px] bg-white border border-[#ababab] flex items-center justify-center text-[7px] text-[#777]">◀</div>
        <div class="ml-[233px] w-[485px] bg-white border border-[#ababab]"></div>
        <div class="ml-[232px] w-[15px] bg-white border border-[#ababab] flex items-center justify-center text-[7px] text-[#777]">▶</div>
      </div>

      <!-- page tabs -->
      <div class="mt-[7px] h-[25px] flex items-center pl-[15px] whitespace-nowrap text-[12px]">
        <span class="w-[129px] font-bold text-[#3b56a3] text-[11.500px]">Brainstorming Diagram</span>
        <span class="ml-[15px] w-px h-[16px] bg-[#d4d4d4]"></span>
        <span class="ml-[16px] w-[63px] italic">Background</span>
        <span class="ml-[17px] w-px h-[16px] bg-[#d4d4d4]"></span>
        <span class="ml-[14px]">Vše</span>
        <span class="ml-[3px] text-[11px] leading-[12px]">▲</span>
        <span class="ml-[12px] w-px h-[16px] bg-[#d4d4d4]"></span>
        <svg class="ml-[10px]" width="16" height="16" fill="none" stroke="#444"><circle cx="8" cy="8" r="7"/><path d="M8 4v8M4 8h8" stroke-width="1.500"/></svg>
      </div>
    </div>

    <!-- vertical scrollbar -->
    <div class="w-[15px] shrink-0 mt-[19px] h-[558px] bg-[#f0f0f0] flex flex-col">
      <div class="h-[15px] bg-white border border-[#ababab] flex items-center justify-center text-[7px] text-[#777]">▲</div>
      <div class="mt-[150px] h-[247px] bg-white border border-[#ababab]"></div>
      <div class="mt-auto h-[15px] bg-white border border-[#ababab] flex items-center justify-center text-[7px] text-[#777]">▼</div>
    </div>
    <div class="ml-[6px] w-[7px] border-l border-[#9aa0aa]"></div>
    <div class="w-[5px] border-l border-[#3b56a3]"></div>

    <!-- outline window -->
    <div class="absolute left-[262px] top-[355px] w-[223px] h-[225px] bg-white border border-[#ababab]">
      <div class="absolute left-[6px] top-[11px] [writing-mode:vertical-rl] text-[#3b56a3] font-semibold text-[10.5px] leading-[20px] whitespace-nowrap">OKNO OSNOVY</div>
      <div class="absolute left-[41px] top-[11px] flex items-center">
        <svg width="34" height="18" fill="none"><rect x="0.500" y="5.500" width="8" height="8" stroke="#888"/><path d="M2 9.500h5M4.500 7v5" stroke="#3b56a3"/><path d="M10 9.500h4" stroke="#888" stroke-dasharray="1 1"/><g stroke="#00008b"><rect x="15.500" y="1.500" width="4" height="4"/><rect x="28.500" y="1.500" width="3" height="3"/><rect x="28.500" y="6.500" width="3" height="3"/><rect x="15.500" y="14.500" width="3" height="3"/><rect x="28.500" y="14.500" width="3" height="3"/><path d="M19.500 5v3M28 3h-2v6h2M18.500 16h2v-4M28 16h-2v-4"/></g><ellipse cx="23" cy="10" rx="3.500" ry="2" fill="#38b6e8" stroke="#1a8fd8"/></svg>
        <div class="ml-[1px] w-[135px] h-[18px] bg-[#f0f0f0] overflow-hidden whitespace-nowrap text-[11.5px] tracking-[-0.1px] leading-[18px] text-[#222] pl-[1px]">ChannelBrainstormingDiagram</div>
      </div>
      <svg class="absolute left-[11px] top-[178px]" width="11" height="9" fill="#777"><path d="M0 4h4V3h1V1h1v7H5V6H4V5H0zM7 1h3v7H7z"/></svg>
      <svg class="absolute left-[12px] top-[198px]" width="9" height="9" stroke="#555" stroke-width="2"><path d="M0 0l9 9M9 0L0 9"/></svg>
      <div class="absolute left-[34px] top-[195px] w-[176px] h-[16px] bg-[#f0f0f0] flex items-center">
        <span class="w-[17px] flex justify-center"><svg width="6" height="9" fill="none" stroke="#555" stroke-width="1.800"><path d="M5 1L1.500 4.500 5 8"/></svg></span>
        <div class="w-[106px] h-[16px] bg-[#c8c8c8]"></div>
        <span class="ml-[37px] w-[16px] flex justify-center"><svg width="6" height="9" fill="none" stroke="#555" stroke-width="1.800"><path d="M1 1l3.500 3.500L1 8"/></svg></span>
      </div>
    </div>

    <!-- shape data panel -->
    <div class="absolute left-[1212px] top-[125px] w-[35px] h-[210px] bg-white border border-[#ababab]">
      <div class="absolute left-[6px] top-[11px] [writing-mode:vertical-rl] text-[#3b56a3] text-[11.5px] leading-[20px] whitespace-nowrap">DATA OBRAZCE - STRÁNKA</div>
      <svg class="absolute left-[12px] top-[184px]" width="9" height="9" stroke="#555" stroke-width="2"><path d="M0 0l9 9M9 0L0 9"/></svg>
    </div>
  </div>

  <!-- status bar -->
  <div class="relative h-[20px] shrink-0 bg-[#3b56a3] text-white leading-[20px] whitespace-nowrap flex items-center">
    <span class="ml-[7px] w-[72px]">STRÁNKA 1 Z 1</span>
    <span class="ml-[20px] w-[91px]">ANGLIČTINA (USA)</span>
    <svg class="ml-[20px]" width="14" height="14" fill="#fff"><rect x="0" y="0" width="5" height="5"/><rect x="6" y="1" width="8" height="3" opacity="0.800"/><rect x="0" y="6" width="14" height="8"/><path d="M2 8h2v1H2zM6 8h2v1H6zM10 8h2v1h-2zM2 11h2v1H2zM6 11h2v1H6zM10 11h2v1h-2z" fill="#3b56a3"/></svg>
    <svg class="ml-[798px]" width="14" height="14" fill="none" stroke="#fff"><path d="M0 .5h14M1.500 .5v2h11v-2M2.500 3v4h9V3M7 7v5M4 12.500h6"/></svg>
    <span class="ml-[17px] w-[6px] h-[2px] bg-white"></span>
    <div class="relative ml-[4px] w-[100px] h-px bg-white">
      <span class="absolute left-[29px] top-[-5px] w-[4px] h-[11px] bg-white"></span>
      <span class="absolute left-[50px] top-[-2px] w-px h-[5px] bg-white"></span>
    </div>
    <svg class="ml-[4px]" width="9" height="9" fill="#fff"><path d="M3.500 0h2v3.500H9v2H5.500V9h-2V5.500H0v-2h3.500z"/></svg>
    <span class="ml-[14px] w-[26px] text-[#dfe4f3] text-[12px]">64 %</span>
    <svg class="ml-[12px]" width="14" height="14"><rect width="14" height="14" fill="#7f92c8"/><path d="M7 1l2 2H5zM7 13l-2-2h4zM1 7l2-2v4zM13 7l-2 2V5z" fill="#fff"/></svg>
    <svg class="ml-[14px]" width="14" height="13" fill="none" stroke="#fff"><path d="M.5 5V.5H6M8 .5h5.500V5M.5 7v5.500H6"/><rect x="5.500" y="6.500" width="8" height="5"/></svg>
  </div>
  <div class="h-[3px] shrink-0 bg-[#75695a]"></div>
</div>
</body>
</html>
